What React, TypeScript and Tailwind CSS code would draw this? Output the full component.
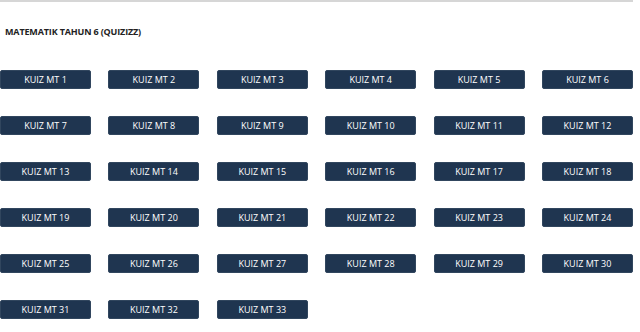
export default function App() {
  const quizzes = Array.from({ length: 33 }, (_, i) => i + 1)

  return (
    <div className="w-[640px] h-[332px] bg-white overflow-hidden font-['Open_Sans',sans-serif]">
      {/* Top rule */}
      <div className="h-[2px] w-[633px] bg-[#d6d6d6]"></div>

      {/* Title */}
      <h2 className="mt-[23px] pl-[5px] text-[9px] leading-[13px] font-bold tracking-[-0.15px] text-[#222]">
        MATEMATIK TAHUN 6 (QUIZIZZ)
      </h2>

      {/* Quiz buttons */}
      <div className="mt-[32px] grid w-[633px] grid-cols-6 gap-x-[17.4px] gap-y-[27px]">
        {quizzes.map((n) => (
          <a
            key={n}
            href="#"
            className="flex h-[19px] items-center justify-center rounded-[2px] border border-[#31465e] bg-[#1f3550] text-[9px] text-white"
          >
            KUIZ MT {n}
          </a>
        ))}
      </div>
    </div>
  )
}
